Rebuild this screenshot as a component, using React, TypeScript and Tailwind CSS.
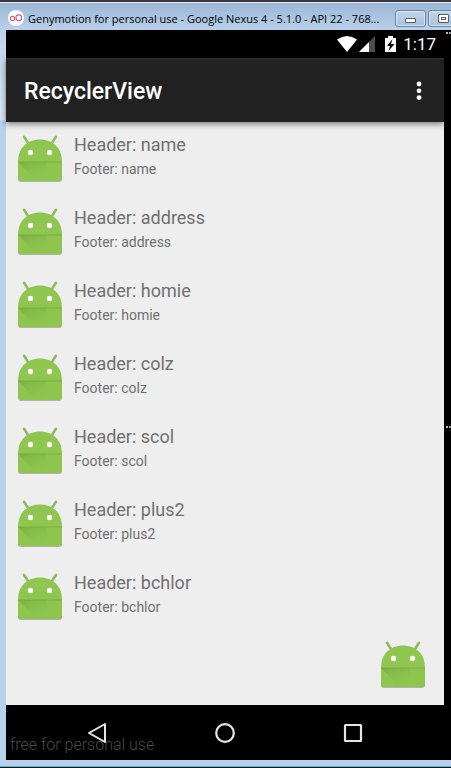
import React from "react";

const people = ["name", "address", "homie", "colz", "scol", "plus2", "bchlor"];

function AndroidIcon() {
  return (
    <svg width="48" height="50" viewBox="0 0 48 50" className="block shrink-0" aria-hidden="true">
      <defs>
        <linearGradient id="fold" x1="0" y1="0" x2="0.8" y2="1">
          <stop offset="0" stopColor="#6fa23c" stopOpacity="0.65" />
          <stop offset="0.5" stopColor="#7fb548" stopOpacity="0.3" />
          <stop offset="0.9" stopColor="#8bc34a" stopOpacity="0" />
        </linearGradient>
      </defs>
      <path d="M2 26 V44 Q2 47 5 47 H43 Q46 47 46 44 V26 Z" fill="#9c9f9a" opacity="0.75" transform="translate(0 1)" />
      <path d="M8 2.800 L14 12 M40 2.800 L34 12" stroke="#8fbc5b" strokeWidth="2.600" strokeLinecap="round" />
      <path d="M2 28 C2 14 11 5.500 24 5.500 C37 5.500 46 14 46 28 Z" fill="#8fc650" />
      <path d="M2 27.500 H46 V44.500 Q46 47 43.500 47 H4.500 Q2 47 2 44.500 Z" fill="#8dc54e" />
      <path d="M2 28 H30 L36 47 H21 Z" fill="url(#fold)" />
      <path d="M2 28 H46" stroke="#79ad42" strokeWidth="1.200" />
      <circle cx="14.500" cy="18.500" r="2.700" fill="#fff" />
      <circle cx="33.500" cy="18.500" r="2.700" fill="#fff" />
    </svg>
  );
}

function TitleBar() {
  return (
    <header className="flex h-[30px] items-start overflow-hidden border-t-2 border-[#3b3438] bg-linear-to-b from-[#9ab5d5] to-[#b9d1ea] pl-2 shadow-[inset_0_1px_0_#dce9f5]">
      <svg width="16" height="16" viewBox="0 0 16 16" className="mt-2 shrink-0" aria-hidden="true">
        <circle cx="8" cy="8" r="8" fill="#fff" />
        <circle cx="4.500" cy="8.500" r="2.200" fill="none" stroke="#e0527d" strokeWidth="1.100" />
        <circle cx="10.800" cy="7.800" r="2.900" fill="none" stroke="#e0527d" strokeWidth="1.100" />
      </svg>
      <h1 className="mt-2 ml-1 min-w-0 flex-1 overflow-hidden font-['Open_Sans','Noto_Sans',sans-serif] text-[11px] leading-[18px] whitespace-nowrap text-black">
        Genymotion for personal use - Google Nexus 4 - 5.1.0 - API 22 - 768...
      </h1>
      <div className="-mr-2 ml-1 flex shrink-0 gap-0.5 pt-2">
        <button aria-label="Minimize" className="flex h-[17px] w-[31px] items-center justify-center rounded-[3px] border border-[#6c84a3] bg-linear-to-b from-[#c2d5eb] to-[#a9c1dd] pt-1 shadow-[inset_0_0_0_1px_#d5e3f2]">
          <span className="h-[5px] w-[11px] rounded-[1px] border border-[#555c68] bg-white" />
        </button>
        <button aria-label="Maximize" className="flex h-[17px] w-[31px] items-center justify-center rounded-[3px] border border-[#6c84a3] bg-linear-to-b from-[#c2d5eb] to-[#a9c1dd] shadow-[inset_0_0_0_1px_#d5e3f2]">
          <span className="flex h-[9px] w-[11px] items-center justify-center rounded-[1px] border border-[#555c68] bg-white">
            <span className="h-[3px] w-[5px] border border-[#555c68]" />
          </span>
        </button>
      </div>
    </header>
  );
}

function StatusBar() {
  return (
    <div className="flex h-7 items-center justify-end bg-black pr-2">
      <svg width="60" height="18" viewBox="0 0 60 18" aria-label="Wi-Fi, signal, charging" role="img">
        <path d="M0 4.500 Q10 -2.500 20 4.500 L10 17 Z" fill="#fff" />
        <path d="M22 17 L38 1 V17 Z" fill="#4d4d4d" />
        <path d="M22 17 L32 7 V17 Z" fill="#fff" />
        <path d="M48 3 H51 V1 H56 V3 H59 V17 H48 Z" fill="#fff" />
        <path d="M55.500 4 L50 11 H53 L51.500 16 L57.500 9 H54 Z" fill="#000" />
      </svg>
      <time className="ml-1.5 text-[17px] leading-7 text-white">1:17</time>
    </div>
  );
}

export default function App() {
  return (
    <div className="flex min-h-screen flex-col border-b border-black bg-[#b9d1ea] font-[Roboto,sans-serif]">
      <TitleBar />
      <div className="flex flex-1 border-b border-[#27cbe8] bg-[linear-gradient(to_bottom,#bdd3ec_0,#dce8f5_90px,#b9d1ea_91px)] pb-1.5 pl-1.5">
        <div className="flex min-w-0 flex-1 flex-col bg-black">
          <div className="flex flex-1">
            <div className="flex min-w-0 flex-1 flex-col">
              <StatusBar />
              <div className="z-10 flex h-16 items-center justify-between border-t-2 border-[#2b2b2b] bg-[#212121] pr-4 pl-[18px] shadow-[0_2px_6px_rgba(0,0,0,0.5)]">
                <h2 className="pt-0.5 text-[23px] leading-8 font-medium text-white">RecyclerView</h2>
                <button aria-label="More options" className="flex h-10 w-[18px] items-center justify-center">
                  <svg width="6" height="20" viewBox="0 0 6 20" fill="#fff">
                    <circle cx="3" cy="3" r="2.400" />
                    <circle cx="3" cy="9.800" r="2.400" />
                    <circle cx="3" cy="16.600" r="2.400" />
                  </svg>
                </button>
              </div>
              <main className="flex flex-1 flex-col bg-[#eee] pt-3">
                <ul className="flex flex-col gap-[23px]">
                  {people.map((p) => (
                    <li key={p} className="flex h-[50px] pl-2.5">
                      <AndroidIcon />
                      <div className="ml-2.5 text-[#707070]">
                        <p className="text-[18px] leading-[22px]">Header: {p}</p>
                        <p className="mt-[5px] text-[14px] leading-4">Footer: {p}</p>
                      </div>
                    </li>
                  ))}
                </ul>
                <button aria-label="Add" className="mt-auto mr-[17px] mb-[15px] self-end">
                  <AndroidIcon />
                </button>
              </main>
            </div>
            <div className="flex w-[7px] shrink-0 flex-col bg-black pt-0.5">
              <span className="ml-0.5 h-0.5 border-t-2 border-dotted border-[#bbb]" />
              <span className="mt-[392px] ml-0.5 h-0.5 border-t-2 border-dotted border-[#bbb]" />
            </div>
          </div>
          <nav className="relative flex h-[55px] items-center justify-around bg-black pr-[7px]">
            <p className="absolute bottom-[3px] left-1 text-[16px] leading-6 font-light text-[#484848]">free for personal use</p>
            <div className="relative flex w-full justify-center gap-[108px]">
              <button aria-label="Back">
                <svg width="20" height="22" viewBox="0 0 20 22" className="block">
                  <path d="M18 2 V20 L2 11 Z" fill="none" stroke="#e6e6e6" strokeWidth="2" strokeLinejoin="round" />
                </svg>
              </button>
              <button aria-label="Home">
                <svg width="20" height="22" viewBox="0 0 20 22" className="block">
                  <circle cx="10" cy="11" r="8.800" fill="none" stroke="#e6e6e6" strokeWidth="2.200" />
                </svg>
              </button>
              <button aria-label="Recent apps">
                <svg width="20" height="22" viewBox="0 0 20 22" className="block">
                  <rect x="2" y="3" width="16" height="16" rx="0.500" fill="none" stroke="#e6e6e6" strokeWidth="2.200" />
                </svg>
              </button>
            </div>
          </nav>
        </div>
      </div>
    </div>
  );
}
